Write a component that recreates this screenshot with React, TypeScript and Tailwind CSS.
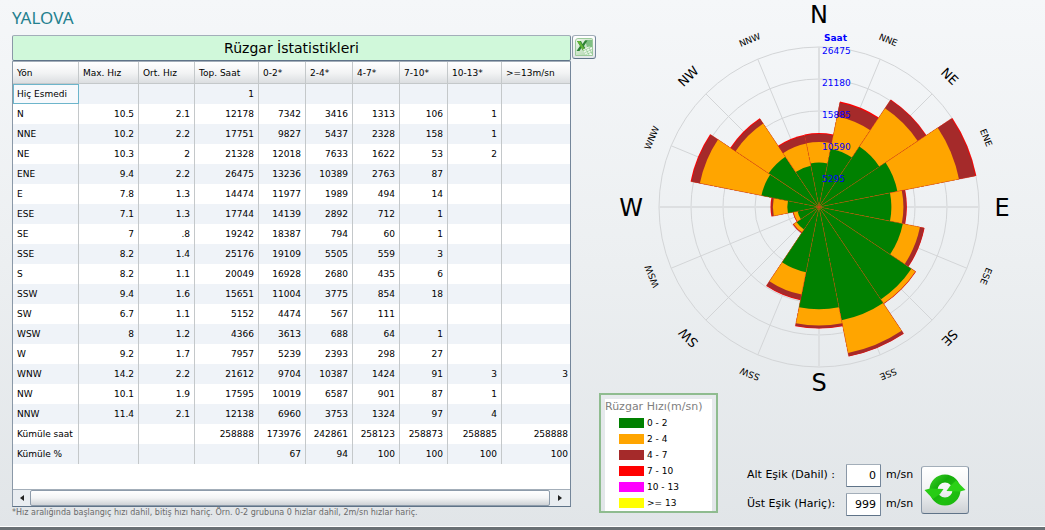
import React from "react";

const columns = [
  { label: "Yön", width: "w-[66px]" },
  { label: "Max. Hız", width: "w-[60px]" },
  { label: "Ort. Hız", width: "w-[56px]" },
  { label: "Top. Saat", width: "w-[64px]" },
  { label: "0-2*", width: "w-[47px]" },
  { label: "2-4*", width: "w-[47px]" },
  { label: "4-7*", width: "w-[47px]" },
  { label: "7-10*", width: "w-[48px]" },
  { label: "10-13*", width: "w-[54px]" },
  { label: ">=13m/sn", width: "w-[68px]" },
];

const rows: string[][] = [
  ["Hiç Esmedi", "", "", "1", "", "", "", "", "", ""],
  ["N", "10.5", "2.1", "12178", "7342", "3416", "1313", "106", "1", ""],
  ["NNE", "10.2", "2.2", "17751", "9827", "5437", "2328", "158", "1", ""],
  ["NE", "10.3", "2", "21328", "12018", "7633", "1622", "53", "2", ""],
  ["ENE", "9.4", "2.2", "26475", "13236", "10389", "2763", "87", "", ""],
  ["E", "7.8", "1.3", "14474", "11977", "1989", "494", "14", "", ""],
  ["ESE", "7.1", "1.3", "17744", "14139", "2892", "712", "1", "", ""],
  ["SE", "7", ".8", "19242", "18387", "794", "60", "1", "", ""],
  ["SSE", "8.2", "1.4", "25176", "19109", "5505", "559", "3", "", ""],
  ["S", "8.2", "1.1", "20049", "16928", "2680", "435", "6", "", ""],
  ["SSW", "9.4", "1.6", "15651", "11004", "3775", "854", "18", "", ""],
  ["SW", "6.7", "1.1", "5152", "4474", "567", "111", "", "", ""],
  ["WSW", "8", "1.2", "4366", "3613", "688", "64", "1", "", ""],
  ["W", "9.2", "1.7", "7957", "5239", "2393", "298", "27", "", ""],
  ["WNW", "14.2", "2.2", "21612", "9704", "10387", "1424", "91", "3", "3"],
  ["NW", "10.1", "1.9", "17595", "10019", "6587", "901", "87", "1", ""],
  ["NNW", "11.4", "2.1", "12138", "6960", "3753", "1324", "97", "4", ""],
  ["Kümüle saat", "", "", "258888", "173976", "242861", "258123", "258873", "258885", "258888"],
  ["Kümüle %", "", "", "", "67", "94", "100", "100", "100", "100"],
];

const legend = [
  { label: "0 - 2", swatch: "bg-[#008000]" },
  { label: "2 - 4", swatch: "bg-[#ffa500]" },
  { label: "4 - 7", swatch: "bg-[#a52a2a]" },
  { label: "7 - 10", swatch: "bg-[#ff0000]" },
  { label: "10 - 13", swatch: "bg-[#ff00ff]" },
  { label: ">= 13", swatch: "bg-[#ffff00]" },
];

const CX = 220;
const CY = 207;
const RADIUS = 160;
const MAX = 26475;
const bandColors = ["#008000", "#ffa500", "#a52a2a", "#ff0000"];

// Distance of the four main letters from the centre: N, E, S, W
const cardinalRadius = [193, 183, 175, 188];

function polar(angle: number, r: number): [number, number] {
  const a = (angle * Math.PI) / 180;
  return [CX + r * Math.sin(a), CY - r * Math.cos(a)];
}

function wedge(angle: number, r: number) {
  const [x1, y1] = polar(angle - 11.25, r);
  const [x2, y2] = polar(angle + 11.25, r);
  return `M${CX} ${CY}L${x1.toFixed(2)} ${y1.toFixed(2)}A${r.toFixed(2)} ${r.toFixed(2)} 0 0 1 ${x2.toFixed(2)} ${y2.toFixed(2)}Z`;
}

function WindRose() {
  const directions = rows.slice(1, 17);
  return (
    <svg viewBox="0 0 440 393" className="block h-[393px] w-full overflow-visible" role="img" aria-label="Rüzgar gülü">
      {[1, 2, 3, 4, 5].map((n) => (
        <circle key={n} cx={CX} cy={CY} r={(RADIUS * n) / 5} fill="none" stroke="#d3d5d7" strokeWidth="1" />
      ))}
      {directions.map((d, i) => {
        const [x, y] = polar(i * 22.5, RADIUS);
        return (
          <line
            key={d[0]}
            x1={CX}
            y1={CY}
            x2={x}
            y2={y}
            stroke={i % 4 === 0 ? "#dddfe1" : "#d3d5d7"}
            strokeWidth={i % 4 === 0 ? 2 : 1}
          />
        );
      })}
      {directions.map((d, i) => {
        let total = 0;
        const radii = d.slice(4, 8).map((v) => {
          total += Number(v || 0);
          return (total / MAX) * RADIUS;
        });
        return (
          <g key={d[0]}>
            {[3, 2, 1, 0].map((b) => (
              <path key={b} d={wedge(i * 22.5, b === 3 ? radii[3] + 0.4 : radii[b])} fill={bandColors[b]} />
            ))}
          </g>
        );
      })}
      {directions.map((d, i) => {
        const own = Number(d[3]);
        const next = Number(directions[(i + 1) % 16][3]);
        const [x, y] = polar(i * 22.5 + 11.25, (Math.max(own, next) / MAX) * RADIUS);
        return (
          <line key={d[0]} x1={CX} y1={CY} x2={x} y2={y} stroke="#d4401a" strokeOpacity="0.5" strokeWidth="0.8" strokeDasharray="3 1" />
        );
      })}
      {directions.map((d, i) => {
        const cardinal = i % 4 === 0;
        const inter = i % 4 === 2;
        const r = cardinal ? cardinalRadius[i / 4] : inter ? 185 : 181;
        const [x, y] = polar(i * 22.5, r);
        const size = cardinal ? 24 : inter ? 13 : 9;
        return (
          <text
            key={d[0]}
            x={x}
            y={y}
            dy={size * 0.365}
            fontSize={size}
            textAnchor="middle"
            fill="#000"
            transform={cardinal ? undefined : `rotate(${i * 22.5} ${x} ${y})`}
          >
            {d[0]}
          </text>
        );
      })}
      <g fill="#0000ff" fontSize="9">
        <text x="225" y="41" fontWeight="bold">Saat</text>
        {[26475, 21180, 15885, 10590, 5295].map((v, i) => (
          <text key={v} x="223" y={54 + i * 32}>{v}</text>
        ))}
      </g>
    </svg>
  );
}

function ExcelIcon() {
  return (
    <svg viewBox="0 0 18 18" className="size-[18px]" aria-hidden="true">
      <defs>
        <linearGradient id="sheet" x1="0" y1="0" x2="1" y2="1">
          <stop offset="0" stopColor="#f1f8ef" />
          <stop offset="1" stopColor="#a9d2a7" />
        </linearGradient>
      </defs>
      <path d="M3 .5H16.500a1 1 0 0 1 1 1V17.500H.5V3Q.5.5 3 .5Z" fill="url(#sheet)" stroke="#9ccb9b" />
      <path d="M10 2H17V9H12Z" fill="#7fc083" />
      <path d="M2 3H6L7.500 6L10 2.500H12.500L9 8L12 13H8.200L6.500 10L4.500 13H1.500L5 8Z" fill="#2e8236" />
      <path d="M2 3H5L9 10L12 13H8.500Z" fill="#63b438" />
      <path d="M8 11.500L14 8.500L17 9.500V17H11Z" fill="#f2faf0" />
      <path d="M9 12.500L16 9M10 14.500L17 11.500M11 16.500L17 14M11 11L14 17M14 9.500L17 16" stroke="#8cc68e" strokeWidth=".7" />
    </svg>
  );
}

function RefreshIcon() {
  return (
    <svg viewBox="0 0 42 34" className="h-[34px] w-[42px]" aria-hidden="true">
      <defs>
        <linearGradient id="ring" x1="0" y1="0" x2="1" y2="1">
          <stop offset="0" stopColor="#3fd52a" />
          <stop offset=".35" stopColor="#14ab0a" />
          <stop offset=".65" stopColor="#1fc010" />
          <stop offset="1" stopColor="#18b40c" />
        </linearGradient>
      </defs>
      <path
        d="M21 1.500A15.500 15.500 0 1 1 21 32.500A15.500 15.500 0 1 1 21 1.500ZM21 9.500A7.500 7.500 0 1 0 21 24.500A7.500 7.500 0 1 0 21 9.500Z"
        fill="url(#ring)"
        fillRule="evenodd"
      />
      <path d="M.5 17L6 15.500L19.500 16L16 21L9 26Z" fill="#27cc14" />
      <path d="M41.500 17L36 18.500L22.500 18L26 13L32 7.500Z" fill="#2bd117" />
    </svg>
  );
}

const bevel = "border border-t-[#a3aeb9] border-r-[#74869a] border-b-[#5f7388] border-l-[#8a98a7]";

function Threshold({ id, label, value }: { id: string; label: string; value: string }) {
  return (
    <div className="flex h-[23px] items-center">
      <label htmlFor={id} className="w-[99px] whitespace-nowrap">{label}</label>
      <input
        id={id}
        type="text"
        defaultValue={value}
        className={`h-[23px] w-[35px] rounded-[1px] bg-white pr-1 text-right outline-none ${bevel}`}
      />
      <span className="pl-[5px]">m/sn</span>
    </div>
  );
}

export default function App() {
  return (
    <div className="flex min-h-screen flex-col bg-linear-to-b from-[#f5f7f9] via-[#eceff1] to-[#e1e5e8] font-['DejaVu_Sans',Verdana,sans-serif] text-[11px] text-black">
      <main className="flex flex-1 pl-3">
        <section className="w-[559px] shrink-0">
          <h1 className="flex h-[35px] items-center font-['Noto_Sans',sans-serif] text-[17px] text-[#24808f]">YALOVA</h1>
          <h2 className={`flex h-[26px] items-center justify-center rounded-[2px] bg-[#d0f8da] text-[14px] ${bevel}`}>
            Rüzgar İstatistikleri
          </h2>
          <div className={`flex h-[446px] flex-col bg-white ${bevel}`}>
            <div className="flex-1 overflow-hidden">
              <table className="w-full table-fixed border-separate border-spacing-0 text-[9px] leading-[12px] whitespace-nowrap">
                <thead>
                  <tr className="h-[22px] bg-linear-to-b from-white via-[#f2f3f4] to-[#d9dcdf]">
                    {columns.map((c) => (
                      <th
                        key={c.label}
                        scope="col"
                        className={`border-r border-b border-[#c4c8ca] p-0 pl-1 text-left font-normal last:border-r-0 ${c.width}`}
                      >
                        {c.label}
                      </th>
                    ))}
                  </tr>
                </thead>
                <tbody>
                  {rows.map((r, ri) => (
                    <tr key={r[0]} className="h-5 odd:bg-[#eff3f8] even:bg-white">
                      {r.map((v, ci) =>
                        ci === 0 ? (
                          <th
                            key={ci}
                            scope="row"
                            className={`p-0 text-left font-normal ${
                              ri === 0
                                ? "border border-[#6db5cb] bg-[#f7f9fc] pl-[3px]"
                                : "border-r border-[#c4c8ca] pl-1"
                            }`}
                          >
                            {v}
                          </th>
                        ) : (
                          <td
                            key={ci}
                            className="border-r border-[#c4c8ca] p-0 pr-1 text-right last:border-r-0 last:pr-[2px]"
                          >
                            {v}
                          </td>
                        ),
                      )}
                    </tr>
                  ))}
                </tbody>
              </table>
            </div>
            <div className="flex h-[17px] border-t border-[#a3aeb9] bg-[#e9edf1]">
              <button type="button" aria-label="Sola kaydır" className="flex w-[17px] items-center justify-center">
                <svg viewBox="0 0 4 6" className="h-[6px] w-1"><path d="M4 0V6L0 3Z" fill="#222" /></svg>
              </button>
              <div className="flex-1 rounded-[2px] border border-[#8d9baa] bg-linear-to-b from-white via-[#f3f4f5] to-[#ced2d6]" />
              <button type="button" aria-label="Sağa kaydır" className="flex w-5 items-center justify-center">
                <svg viewBox="0 0 4 6" className="h-[6px] w-1"><path d="M0 0V6L4 3Z" fill="#222" /></svg>
              </button>
            </div>
          </div>
          <p className="text-[8px] leading-[12px] text-[#6b6b6b]">
            *Hız aralığında başlangıç hızı dahil, bitiş hızı hariç. Örn. 0-2 grubuna 0 hızlar dahil, 2m/sn hızlar hariç.
          </p>
        </section>
        <button
          type="button"
          aria-label="Excel"
          className={`mt-[35px] ml-[1px] flex size-6 shrink-0 items-center justify-center rounded-[3px] bg-linear-to-b from-white to-[#e3e6e9] ${bevel}`}
        >
          <ExcelIcon />
        </button>
        <section className="flex min-w-0 flex-1 flex-col pr-[6px] pl-[3px]">
          <WindRose />
          <div className="flex">
            <div className="h-[120px] w-[119px] shrink-0 border-2 border-[#8fbc8f] px-1 pt-1">
              <div className="h-full bg-white">
                <h3 className="text-[11px] leading-[16px] whitespace-nowrap text-[#808080]">Rüzgar Hızı(m/sn)</h3>
                <ul className="pl-[14px] text-[9px]">
                  {legend.map((l) => (
                    <li key={l.label} className="flex h-4 items-center gap-[3px] leading-[12px]">
                      <span className={`h-[10px] w-[25px] ${l.swatch}`} />
                      {l.label}
                    </li>
                  ))}
                </ul>
              </div>
            </div>
            <form className="ml-[29px] flex items-start pt-[71px]" onSubmit={(e) => e.preventDefault()}>
              <div className="flex flex-col gap-[6px]">
                <Threshold id="lower" label="Alt Eşik (Dahil) :" value="0" />
                <Threshold id="upper" label="Üst Eşik (Hariç):" value="999" />
              </div>
              <button
                type="submit"
                aria-label="Yenile"
                className={`mt-[2px] ml-2 flex size-12 items-center justify-center rounded-[3px] bg-linear-to-b from-white via-[#f2f3f4] to-[#cdd1d5] ${bevel}`}
              >
                <RefreshIcon />
              </button>
            </form>
          </div>
        </section>
      </main>
      <footer className="h-1 border-t border-white bg-[#6a7175]" />
    </div>
  );
}
